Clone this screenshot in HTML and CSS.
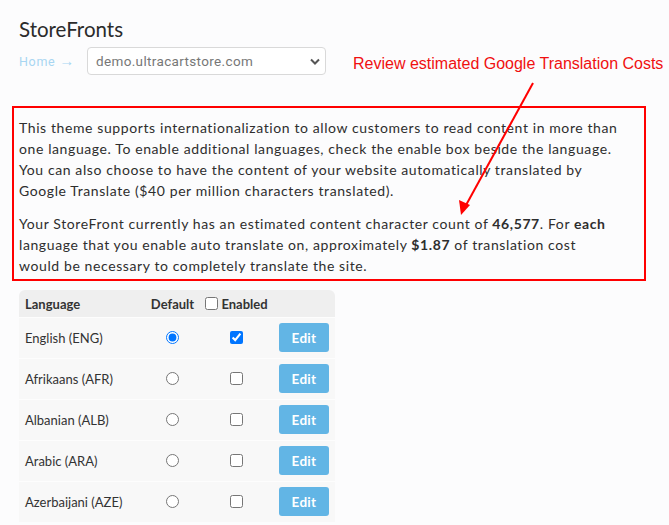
FILE: index.html
```html
<!DOCTYPE html>
<html>
<head>
<meta charset="utf-8">
<link rel="stylesheet" href="styles.css">
</head>
<body>
<div class="page">
  <h1 class="title">StoreFronts</h1>
  <div class="crumbs">
    <span class="home">Home <span class="harr">→</span></span>
    <div class="select">
      <span>demo.ultracartstore.com</span>
      <svg class="chev" width="10" height="7" viewBox="0 0 10 7"><path d="M1 1.5 L5 5.5 L9 1.5" fill="none" stroke="#555" stroke-width="2"/></svg>
    </div>
  </div>
  <div class="note">
    <p>This theme supports internationalization to allow customers to read content in more than<br>one language. To enable additional languages, check the enable box beside the language.<br>You can also choose to have the content of your website automatically translated by<br>Google Translate ($40 per million characters translated).</p>
    <p>Your StoreFront currently has an estimated content character count of <b>46,577</b>. For <b>each</b><br>language that you enable auto translate on, approximately <b>$1.87</b> of translation cost<br>would be necessary to completely translate the site.</p>
  </div>
  <div class="table">
    <div class="row head">
      <div class="c lang">Language</div>
      <div class="c mid">Default</div>
      <div class="c mid en"><input type="checkbox">Enabled</div>
      <div class="c"></div>
    </div>
    <div class="row">
      <div class="c lang">English (ENG)</div>
      <div class="c mid"><input type="radio" name="d" checked></div>
      <div class="c mid"><input type="checkbox" checked></div>
      <div class="c btnc"><span class="btn">Edit</span></div>
    </div>
    <div class="row">
      <div class="c lang">Afrikaans (AFR)</div>
      <div class="c mid"><input type="radio" name="d"></div>
      <div class="c mid"><input type="checkbox"></div>
      <div class="c btnc"><span class="btn">Edit</span></div>
    </div>
    <div class="row">
      <div class="c lang">Albanian (ALB)</div>
      <div class="c mid"><input type="radio" name="d"></div>
      <div class="c mid"><input type="checkbox"></div>
      <div class="c btnc"><span class="btn">Edit</span></div>
    </div>
    <div class="row">
      <div class="c lang">Arabic (ARA)</div>
      <div class="c mid"><input type="radio" name="d"></div>
      <div class="c mid"><input type="checkbox"></div>
      <div class="c btnc"><span class="btn">Edit</span></div>
    </div>
    <div class="row">
      <div class="c lang">Azerbaijani (AZE)</div>
      <div class="c mid"><input type="radio" name="d"></div>
      <div class="c mid"><input type="checkbox"></div>
      <div class="c btnc"><span class="btn">Edit</span></div>
    </div>
  </div>
  <div class="annot">Review estimated Google Translation Costs</div>
  <svg class="arrow" width="669" height="525" viewBox="0 0 669 525">
    <line x1="533" y1="83" x2="465" y2="207" stroke="#f00" stroke-width="2"/>
    <polygon points="461,215 459,200 470,205" fill="#f00"/>
  </svg>
</div>
</body>
</html>
```
FILE: styles.css
```css
html, body { margin: 0; padding: 0; background: #fcfcfd; }
body { font-family: Lato, "Open Sans", sans-serif; color: #333; }
.page { position: relative; width: 669px; height: 525px; overflow: hidden; padding: 0 0 0 12px; box-sizing: border-box; }
.title { margin: 0; padding: 17px 0 0 7px; font-size: 20.5px; font-weight: 400; line-height: 24px; color: #2b2b2b; }
.crumbs { display: flex; align-items: center; padding: 6px 0 0 7px; }
.home { font-size: 12.5px; color: #a8d6f2; letter-spacing: 0.7px; width: 68px; font-family: Roboto, sans-serif; white-space: nowrap; }
.harr { font-size: 15px; letter-spacing: 0; }
.select { width: 239px; height: 28px; box-sizing: border-box; border: 1px solid #d9d9d9; border-radius: 4px; background: #fff; display: flex; align-items: center; justify-content: space-between; padding: 0 5px 0 8px; font-family: Roboto, sans-serif; font-size: 13.5px; letter-spacing: 0.35px; color: #777; }
.note { margin-top: 31px; width: 634px; box-sizing: border-box; border: 2px solid #f00; padding: 9px 5px 3px 5px; font-size: 14px; line-height: 21px; letter-spacing: 0.6px; color: #2e2e2e; white-space: nowrap; }
.note p { margin: 0 0 12px 0; }
.note p:last-child { margin-bottom: 0; }
.note b { font-weight: 700; }
.table { margin: 9px 0 0 7px; width: 316px; font-size: 13px; }
.row { display: grid; grid-template-columns: 126px 55px 73px 62px; height: 41px; background: #f8f8f8; }
.row + .row { box-shadow: inset 0 1px 0 #fdfdfd; }
.row.head { height: 27px; background: #efefef; border-radius: 6px 6px 0 0; font-weight: 700; }
.c { display: flex; align-items: center; }
.lang { padding-left: 6px; }
.mid { justify-content: center; }
.en input { margin: 0 3px 0 0; }
input { margin: 0; }
.btnc { justify-content: flex-start; padding-left: 6px; }
.btn { display: inline-flex; align-items: center; justify-content: center; width: 50px; height: 29px; background: #62b5e5; color: #fff; font-weight: 700; font-size: 13.5px; border-radius: 3px; letter-spacing: 0.3px; }
.annot { position: absolute; left: 353px; top: 55px; font-family: "Liberation Sans", Arial, sans-serif; font-size: 16px; color: #f01010; white-space: nowrap; }
.arrow { position: absolute; left: 0; top: 0; pointer-events: none; }
```
